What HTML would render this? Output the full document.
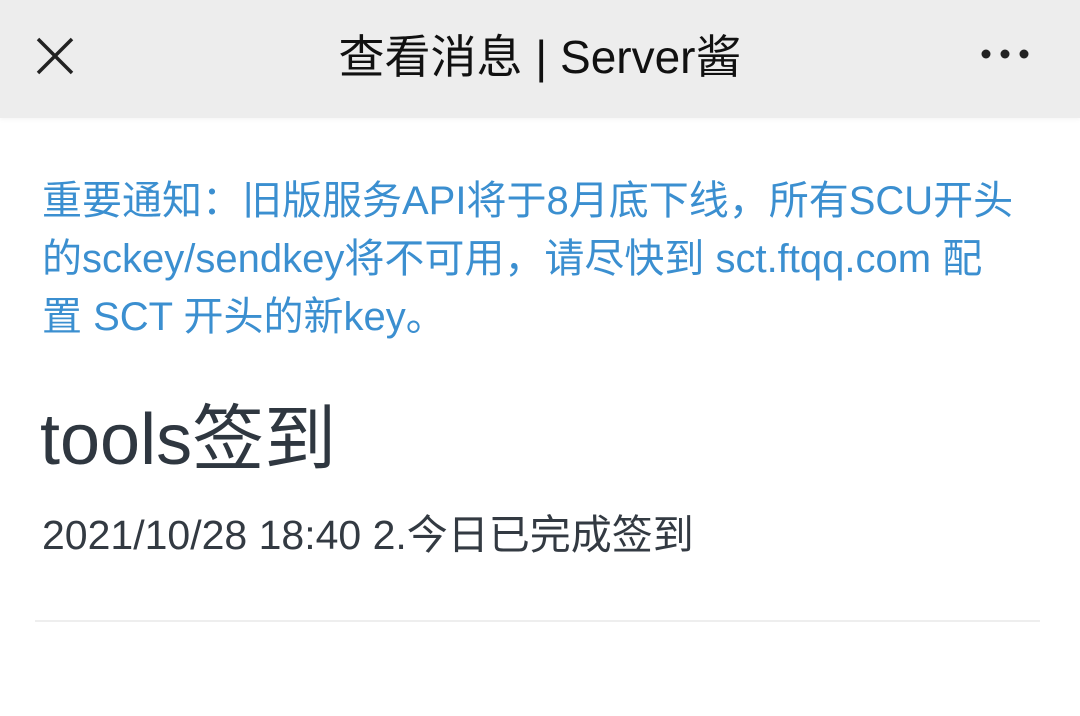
<!DOCTYPE html>
<html><head><meta charset="utf-8"><style>
body{margin:0;width:1080px;height:716px;background:#fff;font-family:"Liberation Sans","Noto Sans CJK SC",sans-serif;overflow:hidden;position:relative}
.hd{position:absolute;left:0;top:0;width:1080px;height:118px;background:#ededed;box-shadow:0 2px 4px rgba(0,0,0,0.04)}
.ttl{position:absolute;left:0;width:1080px;top:27px;text-align:center;font-size:46px;color:#111;line-height:60px}
.notice{position:absolute;left:42px;top:172px;font-size:40px;line-height:58px;color:#3b8fd0;white-space:nowrap}
.h1{position:absolute;left:40px;top:400px;font-size:72px;line-height:80px;color:#2f3740}
.meta{position:absolute;left:42px;top:511px;font-size:41px;line-height:48px;color:#333a42;white-space:nowrap}
.hr{position:absolute;left:35px;top:620px;width:1005px;height:2px;background:#eeeeee}
</style></head><body>
<div class="hd">
<svg style="position:absolute;left:36px;top:37px" width="38" height="38" viewBox="0 0 38 38"><path d="M2 2L36 36M36 2L2 36" stroke="#222" stroke-width="3.5"/></svg>
<div class="ttl">查看消息 | Server酱</div>
<svg style="position:absolute;left:980px;top:47px" width="50" height="14"><circle cx="6" cy="7" r="4.5" fill="#222"/><circle cx="25" cy="7" r="4.5" fill="#222"/><circle cx="44" cy="7" r="4.5" fill="#222"/></svg>
</div>
<div class="notice">重要通知：旧版服务API将于8月底下线，所有SCU开头<br>的sckey/sendkey将不可用，请尽快到 sct.ftqq.com 配<br>置 SCT 开头的新key。</div>
<div class="h1">tools签到</div>
<div class="meta">2021/10/28 18:40 2.今日已完成签到</div>
<div class="hr"></div>
</body></html>
